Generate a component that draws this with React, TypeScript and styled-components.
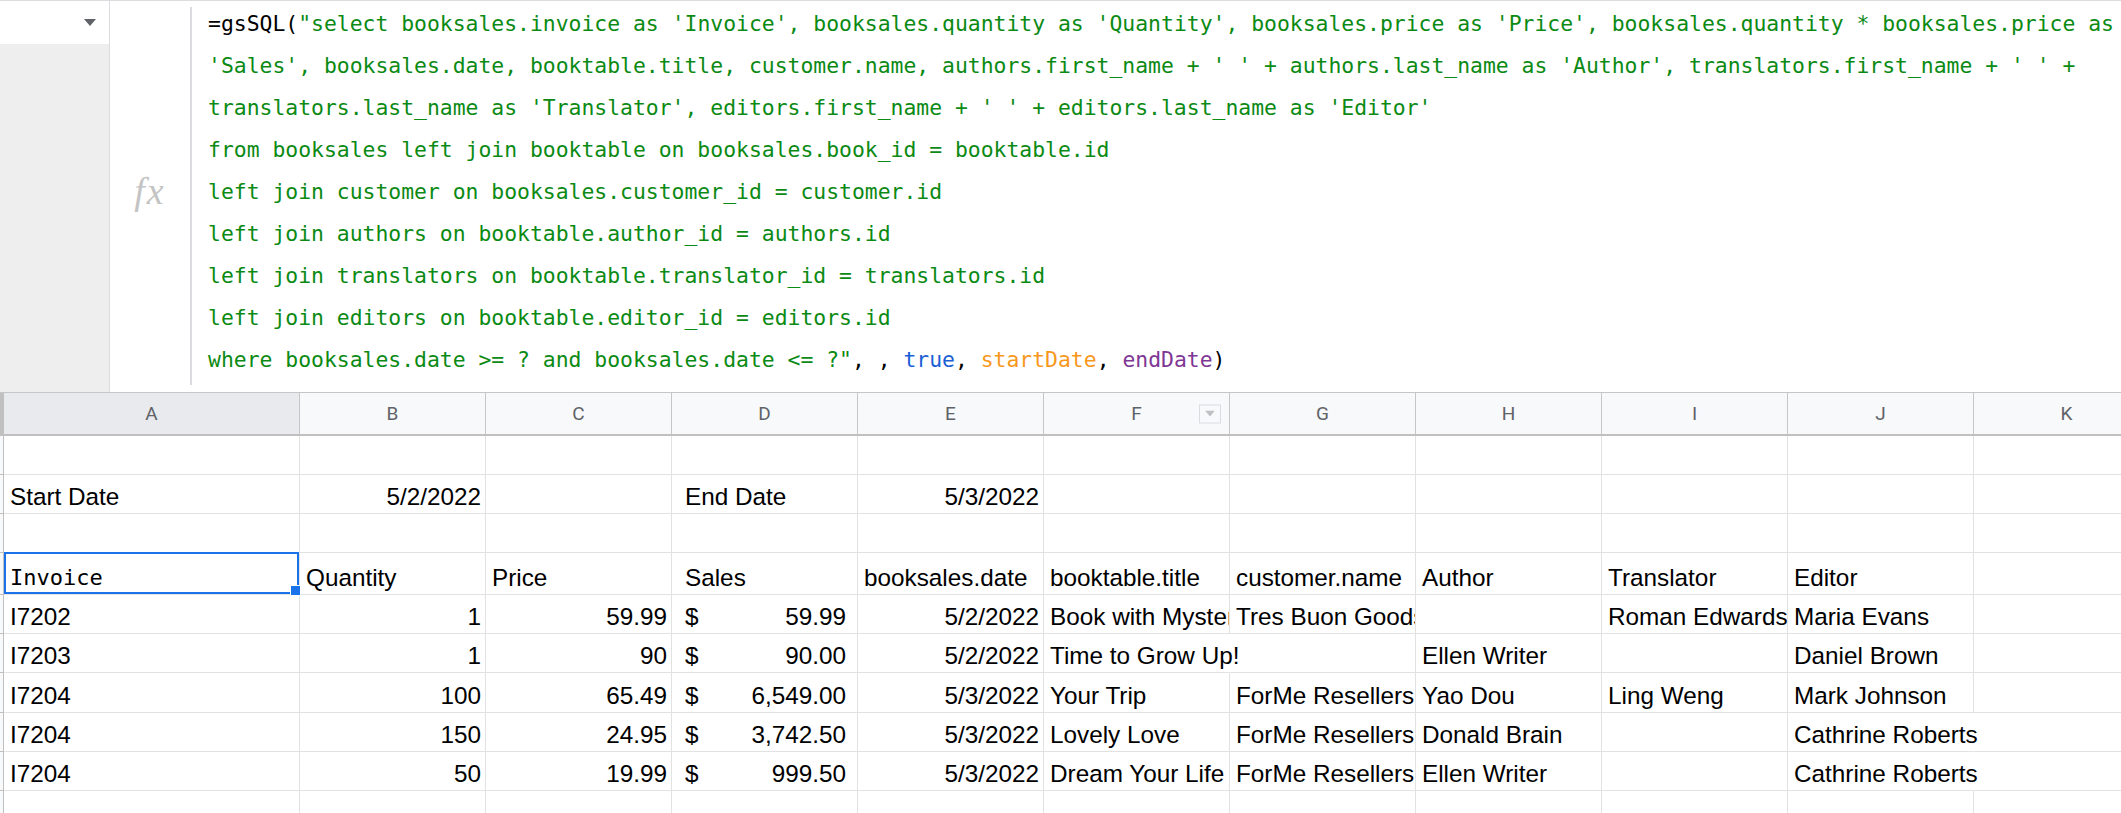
import React from "react";
import styled, { createGlobalStyle, css } from "styled-components";

const GlobalStyle = createGlobalStyle`
  html, body { margin: 0; padding: 0; background: #ffffff; }
  body { width: 2121px; height: 813px; overflow: hidden; }
  #root { width: 2121px; height: 813px; }
`;

const Page = styled.div`
  width: 2121px;
  height: 813px;
  overflow: hidden;
  display: flex;
  flex-direction: column;
  background: #ffffff;
`;

/* ---------- formula bar ---------- */

const FormulaBar = styled.div`
  flex: none;
  height: 392px;
  box-sizing: border-box;
  border-top: 1px solid #dadce0;
  display: grid;
  grid-template-columns: 110px 80px 2px 1fr;
`;

const NameBox = styled.div`
  display: flex;
  flex-direction: column;
  border-right: 1px solid #dadce0;
`;

const NameBoxInput = styled.div`
  height: 43px;
  flex: none;
  background: #ffffff;
  display: flex;
  align-items: center;
  justify-content: flex-end;
  padding-right: 13px;
`;

const NameBoxFill = styled.div`
  flex: 1;
  background: #eeeeee;
`;

const FxCell = styled.div`
  display: flex;
  align-items: center;
  justify-content: center;
  padding-bottom: 12px;
`;

const FxLabel = styled.span`
  font-family: "Liberation Serif", serif;
  font-style: italic;
  font-size: 38px;
  color: #c4c4c4;
  letter-spacing: 2px;
`;

const FormulaDivider = styled.div`
  margin: 6px 0 7px;
  background: #dadce0;
`;

const FormulaText = styled.div`
  padding: 2px 0 0 16px;
  font-family: "DejaVu Sans Mono", monospace;
  font-size: 21.4px;
  line-height: 42px;
  color: #000000;
  white-space: pre;
`;

const FormulaLine = styled.div`
  height: 42px;
`;

type TokenKind = "plain" | "str" | "bool" | "ref1" | "ref2";

const tokenColors: Record<TokenKind, string> = {
  plain: "#000000",
  str: "#0b8a14",
  bool: "#1a5fd6",
  ref1: "#f7981d",
  ref2: "#7e3794",
};

const Token = styled.span<{ $kind: TokenKind }>`
  color: ${(p) => tokenColors[p.$kind]};
`;

const formulaLines: [string, TokenKind][][] = [
  [
    ["=gsSQL(", "plain"],
    [
      "\"select booksales.invoice as 'Invoice', booksales.quantity as 'Quantity', booksales.price as 'Price', booksales.quantity * booksales.price as",
      "str",
    ],
  ],
  [
    [
      "'Sales', booksales.date, booktable.title, customer.name, authors.first_name + ' ' + authors.last_name as 'Author', translators.first_name + ' ' +",
      "str",
    ],
  ],
  [
    [
      "translators.last_name as 'Translator', editors.first_name + ' ' + editors.last_name as 'Editor'",
      "str",
    ],
  ],
  [["from booksales left join booktable on booksales.book_id = booktable.id", "str"]],
  [["left join customer on booksales.customer_id = customer.id", "str"]],
  [["left join authors on booktable.author_id = authors.id", "str"]],
  [["left join translators on booktable.translator_id = translators.id", "str"]],
  [["left join editors on booktable.editor_id = editors.id", "str"]],
  [
    ["where booksales.date >= ? and booksales.date <= ?\"", "str"],
    [", , ", "plain"],
    ["true", "bool"],
    [", ", "plain"],
    ["startDate", "ref1"],
    [", ", "plain"],
    ["endDate", "ref2"],
    [")", "plain"],
  ],
];

/* ---------- sheet grid ---------- */

const COLS = "4px 296px repeat(10, 186px)";

const Sheet = styled.div`
  flex: 1;
  display: flex;
  flex-direction: column;
`;

const HeaderRow = styled.div`
  flex: none;
  height: 44px;
  box-sizing: border-box;
  display: grid;
  grid-template-columns: ${COLS};
  border-top: 1px solid #c4c7c5;
  border-bottom: 2px solid #c0c0c0;
`;

const HeaderStub = styled.div`
  background: #c0c0c0;
`;

const ColHeader = styled.div<{ $selected?: boolean }>`
  position: relative;
  display: flex;
  align-items: center;
  justify-content: center;
  box-sizing: border-box;
  border-right: 1px solid #c4c7c5;
  background: ${(p) => (p.$selected ? "#e8eaed" : "#f8f9fa")};
  font-family: Roboto, "Liberation Sans", sans-serif;
  font-size: 19px;
  color: #5f6368;
`;

const FilterButton = styled.div`
  position: absolute;
  right: 8px;
  top: 50%;
  transform: translateY(-50%);
  width: 22px;
  height: 19px;
  box-sizing: border-box;
  border: 1px solid #dadce0;
  background: #f8f9fa;
  display: flex;
  align-items: center;
  justify-content: center;
`;

const Row = styled.div<{ $h: number }>`
  flex: none;
  height: ${(p) => p.$h}px;
  display: grid;
  grid-template-columns: ${COLS};
`;

const RowStub = styled.div`
  box-sizing: border-box;
  background: #f8f9fa;
  border-right: 1px solid #c0c0c0;
  border-bottom: 1px solid #c0c0c0;
`;

type Align = "left" | "right";

const Cell = styled.div<{
  $align?: Align;
  $spill?: boolean;
  $mono?: boolean;
  $selected?: boolean;
  $indent?: boolean;
}>`
  position: ${(p) => (p.$selected ? "relative" : "static")};
  min-width: 0;
  box-sizing: border-box;
  display: flex;
  align-items: flex-end;
  justify-content: ${(p) => (p.$align === "right" ? "flex-end" : "flex-start")};
  padding: 0 4px 2px 6px;
  border-right: 1px solid ${(p) => (p.$spill ? "transparent" : "#e2e2e2")};
  border-bottom: 1px solid #e2e2e2;
  overflow: ${(p) => (p.$spill || p.$selected ? "visible" : "hidden")};
  white-space: nowrap;
  font-family: ${(p) =>
    p.$mono ? '"DejaVu Sans Mono", monospace' : '"Liberation Sans", Arial, sans-serif'};
  font-size: ${(p) => (p.$mono ? "22px" : "24.3px")};
  line-height: 28px;
  color: #000000;
  ${(p) =>
    p.$indent &&
    css`
      padding-left: 13px;
    `}
`;

const Accounting = styled.div`
  flex: 1;
  display: flex;
  justify-content: space-between;
  padding-right: 7px;
`;

const SelectionBox = styled.div`
  position: absolute;
  top: -1px;
  left: 0;
  right: 0;
  bottom: 0;
  border: 2px solid #1a73e8;
  pointer-events: none;
`;

const FillHandle = styled.div`
  position: absolute;
  right: -4px;
  bottom: -4px;
  width: 9px;
  height: 9px;
  background: #1a73e8;
  border: 1px solid #ffffff;
`;

type CellSpec =
  | string
  | {
      t: string;
      align?: Align;
      spill?: boolean;
      money?: boolean;
    };

const R = (t: string): CellSpec => ({ t, align: "right" });
const M = (t: string): CellSpec => ({ t, money: true });
const S = (t: string): CellSpec => ({ t, spill: true });

const COL_LETTERS = ["A", "B", "C", "D", "E", "F", "G", "H", "I", "J", "K"];

const blank: CellSpec[] = ["", "", "", "", "", "", "", "", "", "", ""];

const rows: { h: number; cells: CellSpec[]; header?: boolean }[] = [
  { h: 39, cells: blank },
  { h: 39, cells: ["Start Date", R("5/2/2022"), "", "End Date", R("5/3/2022"), "", "", "", "", "", ""] },
  { h: 39, cells: blank },
  {
    h: 42,
    header: true,
    cells: [
      "Invoice",
      "Quantity",
      "Price",
      "Sales",
      "booksales.date",
      "booktable.title",
      "customer.name",
      "Author",
      "Translator",
      "Editor",
      "",
    ],
  },
  {
    h: 39,
    cells: [
      "I7202",
      R("1"),
      R("59.99"),
      M("59.99"),
      R("5/2/2022"),
      "Book with Mystery",
      "Tres Buon Goods",
      "",
      "Roman Edwards",
      "Maria Evans",
      "",
    ],
  },
  {
    h: 39,
    cells: [
      "I7203",
      R("1"),
      R("90"),
      M("90.00"),
      R("5/2/2022"),
      S("Time to Grow Up!"),
      "",
      "Ellen Writer",
      "",
      "Daniel Brown",
      "",
    ],
  },
  {
    h: 40,
    cells: [
      "I7204",
      R("100"),
      R("65.49"),
      M("6,549.00"),
      R("5/3/2022"),
      "Your Trip",
      "ForMe Resellers",
      "Yao Dou",
      "Ling Weng",
      "Mark Johnson",
      "",
    ],
  },
  {
    h: 39,
    cells: [
      "I7204",
      R("150"),
      R("24.95"),
      M("3,742.50"),
      R("5/3/2022"),
      "Lovely Love",
      "ForMe Resellers",
      "Donald Brain",
      "",
      S("Cathrine Roberts"),
      "",
    ],
  },
  {
    h: 39,
    cells: [
      "I7204",
      R("50"),
      R("19.99"),
      M("999.50"),
      R("5/3/2022"),
      "Dream Your Life",
      "ForMe Resellers",
      "Ellen Writer",
      "",
      S("Cathrine Roberts"),
      "",
    ],
  },
  { h: 39, cells: blank },
];

const Caret = () => (
  <svg width="12" height="7" viewBox="0 0 12 7">
    <polygon points="0,0 12,0 6,7" fill="#5f6368" />
  </svg>
);

const FilterCaret = () => (
  <svg width="10" height="6" viewBox="0 0 10 6">
    <polygon points="0,0 10,0 5,6" fill="#bdc1c6" />
  </svg>
);

export default function App() {
  return (
    <Page>
      <GlobalStyle />
      <FormulaBar>
        <NameBox>
          <NameBoxInput>
            <Caret />
          </NameBoxInput>
          <NameBoxFill />
        </NameBox>
        <FxCell>
          <FxLabel>fx</FxLabel>
        </FxCell>
        <FormulaDivider />
        <FormulaText>
          {formulaLines.map((line, i) => (
            <FormulaLine key={i}>
              {line.map(([text, kind], j) => (
                <Token key={j} $kind={kind}>
                  {text}
                </Token>
              ))}
            </FormulaLine>
          ))}
        </FormulaText>
      </FormulaBar>
      <Sheet>
        <HeaderRow>
          <HeaderStub />
          {COL_LETTERS.map((l) => (
            <ColHeader key={l} $selected={l === "A"}>
              {l}
              {l === "F" && (
                <FilterButton>
                  <FilterCaret />
                </FilterButton>
              )}
            </ColHeader>
          ))}
        </HeaderRow>
        {rows.map((row, ri) => (
          <Row key={ri} $h={row.h}>
            <RowStub />
            {row.cells.map((c, ci) => {
              const spec = typeof c === "string" ? { t: c } : c;
              const selected = row.header && ci === 0;
              const indent = ci === 3;
              if ("money" in spec && spec.money) {
                return (
                  <Cell key={ci} $indent>
                    <Accounting>
                      <span>$</span>
                      <span>{spec.t}</span>
                    </Accounting>
                  </Cell>
                );
              }
              return (
                <Cell
                  key={ci}
                  $align={"align" in spec ? spec.align : undefined}
                  $spill={"spill" in spec ? spec.spill : undefined}
                  $mono={selected}
                  $selected={selected}
                  $indent={indent}
                >
                  {spec.t}
                  {selected && (
                    <SelectionBox>
                      <FillHandle />
                    </SelectionBox>
                  )}
                </Cell>
              );
            })}
          </Row>
        ))}
      </Sheet>
    </Page>
  );
}
